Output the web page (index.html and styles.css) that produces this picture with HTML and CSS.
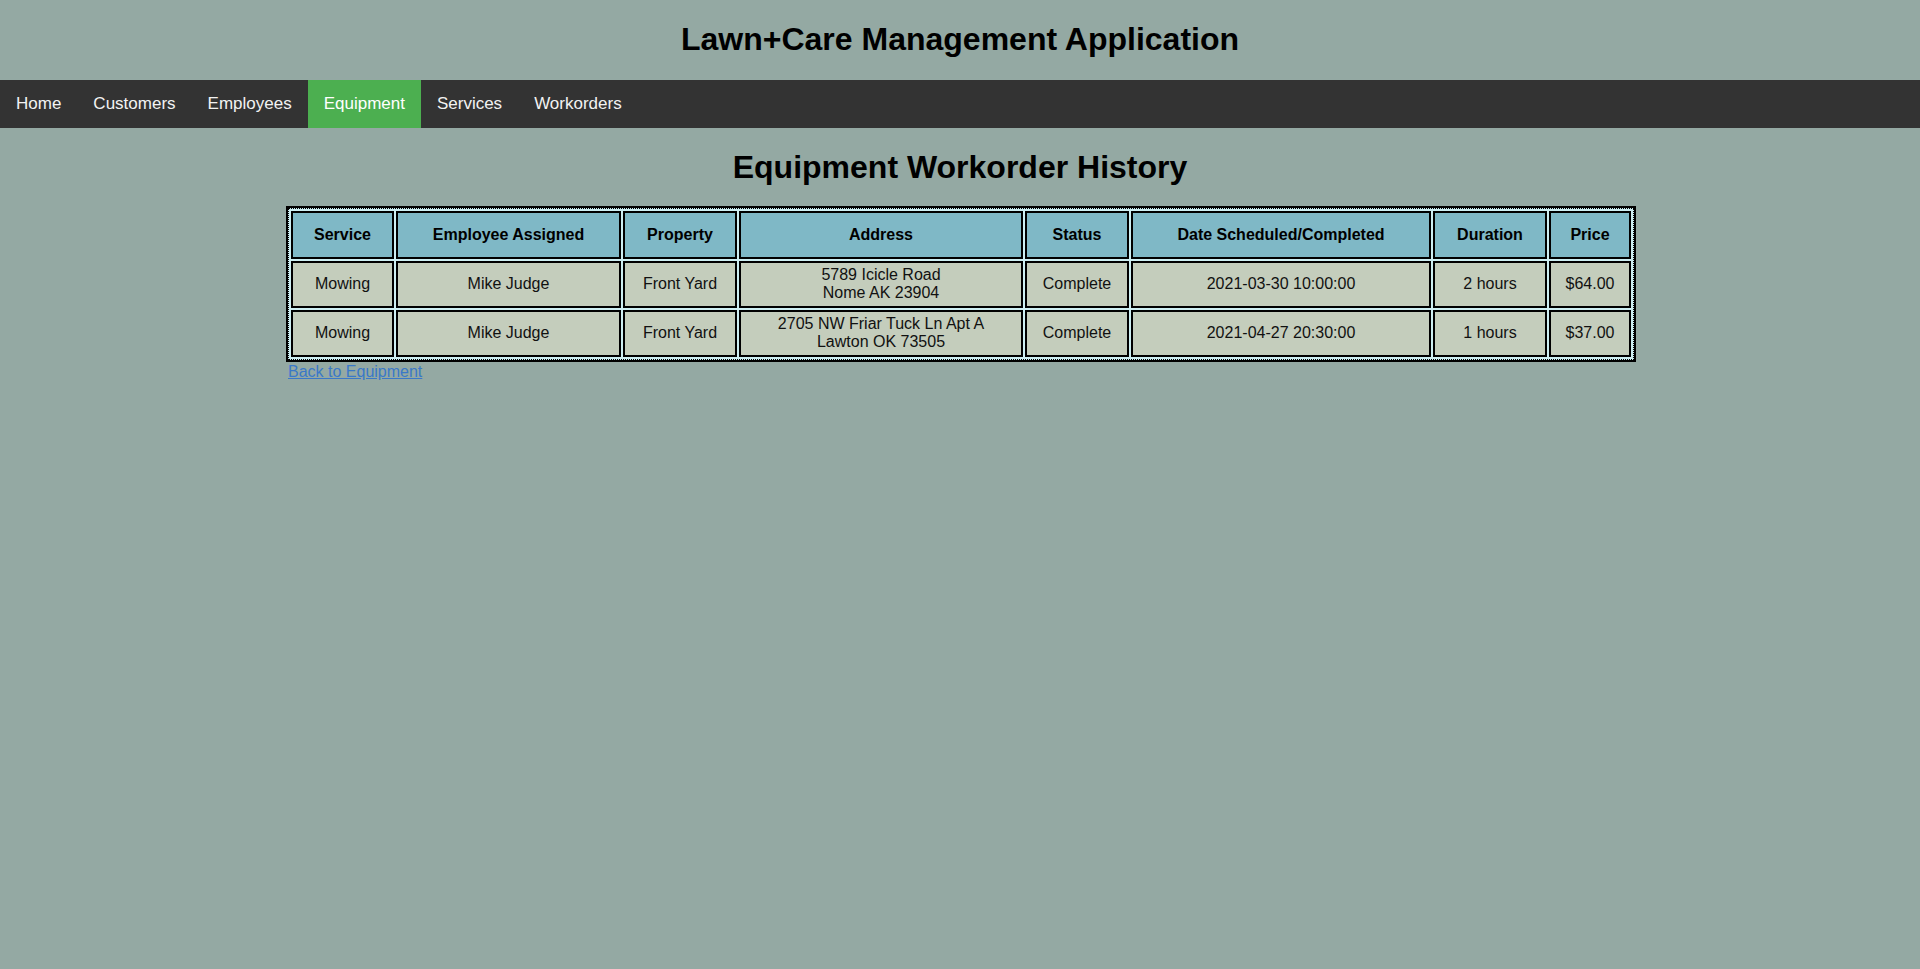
FILE: index.html
```html
<!DOCTYPE html>
<html lang="en">
<head>
<meta charset="utf-8">
<title>Equipment Workorder History</title>
<link rel="stylesheet" href="styles.css">
</head>
<body>
<header class="site-header">
  <h1 class="site-title">Lawn+Care Management Application</h1>
</header>
<nav class="topnav">
  <a href="#">Home</a>
  <a href="#">Customers</a>
  <a href="#">Employees</a>
  <a href="#" class="active">Equipment</a>
  <a href="#">Services</a>
  <a href="#">Workorders</a>
</nav>
<main class="content">
  <h1 class="page-title">Equipment Workorder History</h1>
  <div class="table-wrap">
    <table class="history">
      <colgroup>
        <col class="c-service">
        <col class="c-employee">
        <col class="c-property">
        <col class="c-address">
        <col class="c-status">
        <col class="c-date">
        <col class="c-duration">
        <col class="c-price">
      </colgroup>
      <thead>
        <tr class="head-row">
          <th>Service</th>
          <th>Employee Assigned</th>
          <th>Property</th>
          <th>Address</th>
          <th>Status</th>
          <th>Date Scheduled/Completed</th>
          <th>Duration</th>
          <th>Price</th>
        </tr>
      </thead>
      <tbody>
        <tr>
          <td>Mowing</td>
          <td>Mike Judge</td>
          <td>Front Yard</td>
          <td>5789 Icicle Road<br>Nome AK 23904</td>
          <td>Complete</td>
          <td>2021-03-30 10:00:00</td>
          <td>2 hours</td>
          <td>$64.00</td>
        </tr>
        <tr>
          <td>Mowing</td>
          <td>Mike Judge</td>
          <td>Front Yard</td>
          <td>2705 NW Friar Tuck Ln Apt A<br>Lawton OK 73505</td>
          <td>Complete</td>
          <td>2021-04-27 20:30:00</td>
          <td>1 hours</td>
          <td>$37.00</td>
        </tr>
      </tbody>
    </table>
    <a href="#" class="back-link">Back to Equipment</a>
  </div>
</main>
</body>
</html>
```
FILE: styles.css
```css
* {
  box-sizing: border-box;
}

html, body {
  margin: 0;
  padding: 0;
}

body {
  background: #94a9a3;
  font-family: "Liberation Sans", Arial, sans-serif;
  font-size: 16px;
  color: #000;
}

.site-title,
.page-title {
  font-family: "Liberation Sans", Arial, sans-serif;
  font-size: 32px;
  font-weight: bold;
  text-align: center;
  margin: 21.44px 0;
  line-height: normal;
}

.topnav {
  display: flex;
  background: #333333;
}

.topnav a {
  display: block;
  color: #f2f2f2;
  text-decoration: none;
  font-size: 17px;
  padding: 14px 16px;
  line-height: normal;
}

.topnav a.active {
  background: #4caf50;
  color: #ffffff;
}

.table-wrap {
  width: calc(70% + 2px);
  margin-left: 15%;
}

.history {
  width: 100%;
  table-layout: fixed;
  border-collapse: separate;
  border-spacing: 2px;
  border: 1px dotted #000;
  box-shadow: 0 0 0 2px #000;
  background: #cdeef2;
  margin-top: 2px;
}

.history th,
.history td {
  border: 2px solid #000;
  text-align: center;
  vertical-align: middle;
  padding: 2px 4px;
  line-height: normal;
}

.history tr {
  height: 47px;
}

.history .head-row {
  height: 48px;
}

.history th {
  background: #7fb8c6;
  font-weight: bold;
}

.history td {
  background: #c4cdbc;
  color: #111;
}

.c-service { width: 103px; }
.c-employee { width: 225px; }
.c-property { width: 114px; }
.c-address { width: 284px; }
.c-status { width: 104px; }
.c-date { width: 300px; }
.c-duration { width: 114px; }
.c-price { width: 82px; }

.back-link {
  display: inline-block;
  color: #3a78c8;
  text-decoration: underline;
  font-size: 16px;
  margin-top: 3px;
}
```
